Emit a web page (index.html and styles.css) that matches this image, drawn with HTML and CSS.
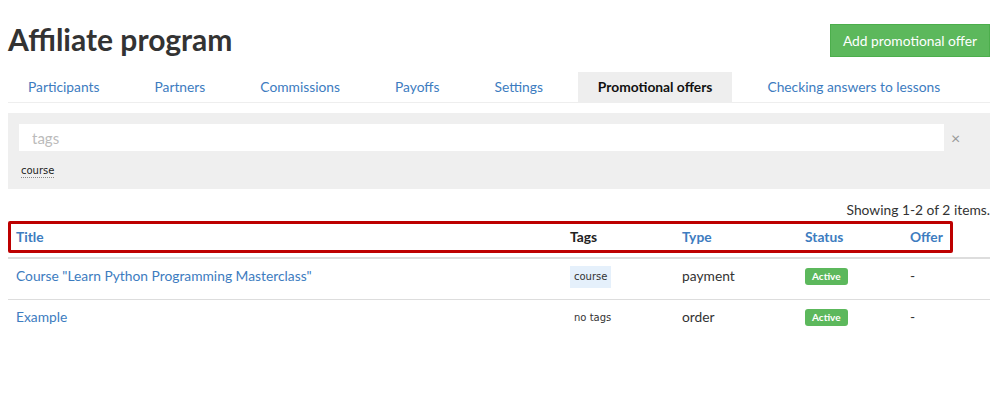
FILE: index.html
```html
<!DOCTYPE html>
<html lang="en">
<head>
  <meta charset="UTF-8">
  <title>Affiliate program</title>
  <link rel="stylesheet" href="styles.css">
</head>
<body>
  <div class="page">
    <div class="page-header">
      <h1>Affiliate program</h1>
      <a class="btn-add" href="#">Add promotional offer</a>
    </div>

    <ul class="tabs">
      <li><a href="#">Participants</a></li>
      <li><a href="#">Partners</a></li>
      <li><a href="#">Commissions</a></li>
      <li><a href="#">Payoffs</a></li>
      <li><a href="#">Settings</a></li>
      <li class="active"><a href="#">Promotional offers</a></li>
      <li><a href="#">Checking answers to lessons</a></li>
    </ul>

    <div class="filter">
      <div class="filter-row">
        <input type="text" class="filter-input" placeholder="tags">
        <span class="filter-clear">&times;</span>
      </div>
      <div class="filter-tags">
        <span class="tag-link">course</span>
      </div>
    </div>

    <div class="summary">Showing <b>1-2</b> of <b>2</b> items.</div>

    <div class="grid">
      <div class="highlight"></div>
      <table>
        <thead>
          <tr>
            <th class="col-title"><a href="#">Title</a></th>
            <th class="col-tags">Tags</th>
            <th class="col-type"><a href="#">Type</a></th>
            <th class="col-status"><a href="#">Status</a></th>
            <th><a href="#">Offer</a></th>
          </tr>
        </thead>
        <tbody>
          <tr>
            <td><a href="#">Course "Learn Python Programming Masterclass"</a></td>
            <td><span class="tag">course</span></td>
            <td>payment</td>
            <td><span class="badge">Active</span></td>
            <td>-</td>
          </tr>
          <tr>
            <td><a href="#">Example</a></td>
            <td><span class="tag tag-empty">no tags</span></td>
            <td>order</td>
            <td><span class="badge">Active</span></td>
            <td>-</td>
          </tr>
        </tbody>
      </table>
    </div>
  </div>
</body>
</html>
```

FILE: styles.css
```css
body {
  margin: 0;
  font-family: Lato, "Open Sans", sans-serif;
  font-size: 13.8px;
  color: #333;
  background-color: #fff;
}

a {
  color: #3d7cc0;
  text-decoration: none;
}

.page {
  padding: 24px 16px 0 8px;
}

.page-header {
  display: flex;
  justify-content: space-between;
  align-items: flex-start;
  height: 48px;
}

.page-header h1 {
  margin: -2px 0 0;
  font-size: 30px;
  line-height: 34px;
  font-weight: 700;
  color: #333;
}

.btn-add {
  display: block;
  background-color: #5cb85c;
  border: 1px solid #4cae4c;
  color: #fff;
  padding: 0 12px;
  line-height: 31px;
}

.tabs {
  display: flex;
  list-style: none;
  margin: 0;
  padding: 0;
  border-bottom: 1px solid #eee;
}

.tabs li {
  margin-right: 15px;
}

.tabs li a {
  display: block;
  padding: 0 20px;
  line-height: 30px;
}

.tabs li.active a {
  background-color: #eee;
  color: #111;
  font-weight: 700;
}

.filter {
  margin-top: 10px;
  background-color: #efefef;
  padding: 11px 11px 12px;
}

.filter-row {
  display: flex;
  align-items: center;
}

.filter-input {
  flex: 1;
  height: 27px;
  border: none;
  padding: 0 13px;
  font-family: inherit;
  font-size: 15px;
  background: #fff;
  outline: none;
}

.filter-input::placeholder {
  color: #bbb;
}

.filter-clear {
  width: 28px;
  padding-left: 7px;
  color: #999;
  font-size: 16px;
}

.filter-tags {
  margin-top: 9px;
  padding-left: 2px;
}

.tag-link {
  font-family: "DejaVu Sans", sans-serif;
  font-size: 10px;
  color: #222;
  border-bottom: 1px dotted #888;
  padding-bottom: 1px;
}

.summary {
  text-align: right;
  margin-top: 13px;
  line-height: 16px;
}

.summary b {
  font-weight: 400;
}

.grid {
  position: relative;
  margin-top: 3px;
}

.highlight {
  position: absolute;
  left: 0;
  top: 0;
  width: 939px;
  height: 26px;
  border: 3px solid #bd0000;
  border-radius: 2px;
}

table {
  width: 100%;
  border-collapse: collapse;
}

th {
  text-align: left;
  font-weight: 700;
  padding: 8px 8px 12px;
  line-height: 16px;
  border-bottom: 2px solid #ddd;
  color: #222;
}

.col-title {
  width: 538px;
}

.col-tags {
  width: 96px;
}

.col-type {
  width: 107px;
}

.col-status {
  width: 89px;
}

td {
  padding: 6px 8px 9px;
  height: 25px;
  line-height: 22px;
  border-bottom: 1px solid #ddd;
  vertical-align: top;
}

tbody tr:last-child td {
  border-bottom: none;
}

.tag {
  display: inline-block;
  vertical-align: 1px;
  font-family: "DejaVu Sans", sans-serif;
  font-size: 10px;
  color: #333;
  background-color: #e5f0fb;
  padding: 0 4px;
  line-height: 22px;
}

.tag-empty {
  background: none;
}

.badge {
  display: inline-block;
  vertical-align: 1px;
  background-color: #5cb85c;
  color: #fff;
  font-size: 10px;
  font-weight: 700;
  padding: 0 7px;
  line-height: 17px;
  border-radius: 3px;
}
```
